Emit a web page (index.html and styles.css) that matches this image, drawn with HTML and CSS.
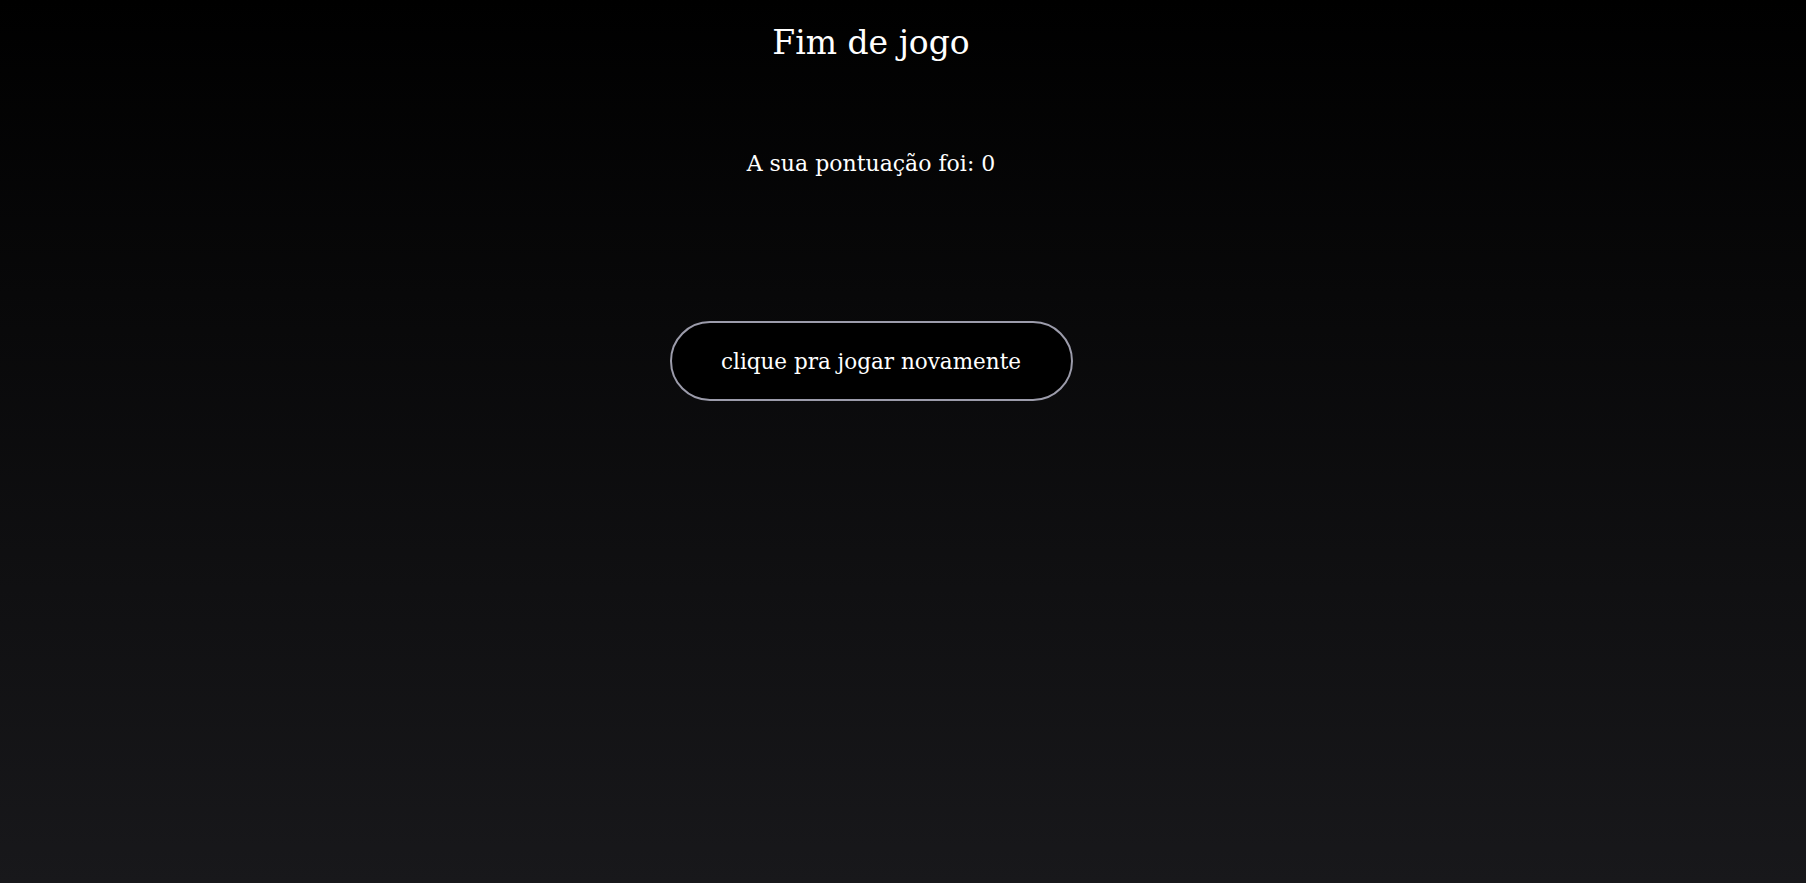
FILE: index.html
```html
<!DOCTYPE html>
<html lang="pt">
<head>
<meta charset="utf-8">
<title>Fim de jogo</title>
<link rel="stylesheet" href="styles.css">
</head>
<body>
<main class="screen">
  <h1 class="title">Fim de jogo</h1>
  <p class="score">A sua pontuação foi: 0</p>
  <button class="replay" type="button">clique pra jogar novamente</button>
</main>
</body>
</html>
```
FILE: styles.css
```css
html, body {
  margin: 0;
  height: 100%;
}
body {
  background: linear-gradient(to bottom, #000000 0%, #18181b 100%);
  color: #ffffff;
  font-family: "DejaVu Serif", "Liberation Serif", serif;
}
.screen {
  display: flex;
  flex-direction: column;
  align-items: center;
  padding-top: 20px;
  padding-right: 64px;
}
.title {
  margin: 0;
  font-size: 33px;
  font-weight: normal;
  line-height: 46px;
}
.score {
  margin: 83px 0 0;
  font-size: 22px;
  line-height: 30px;
}
.replay {
  margin-top: 142px;
  width: 403px;
  height: 80px;
  border: 2px solid #9c9cab;
  border-radius: 40px;
  background: #000000;
  color: #ffffff;
  font-family: "DejaVu Serif", "Liberation Serif", serif;
  font-size: 21.5px;
}
```
